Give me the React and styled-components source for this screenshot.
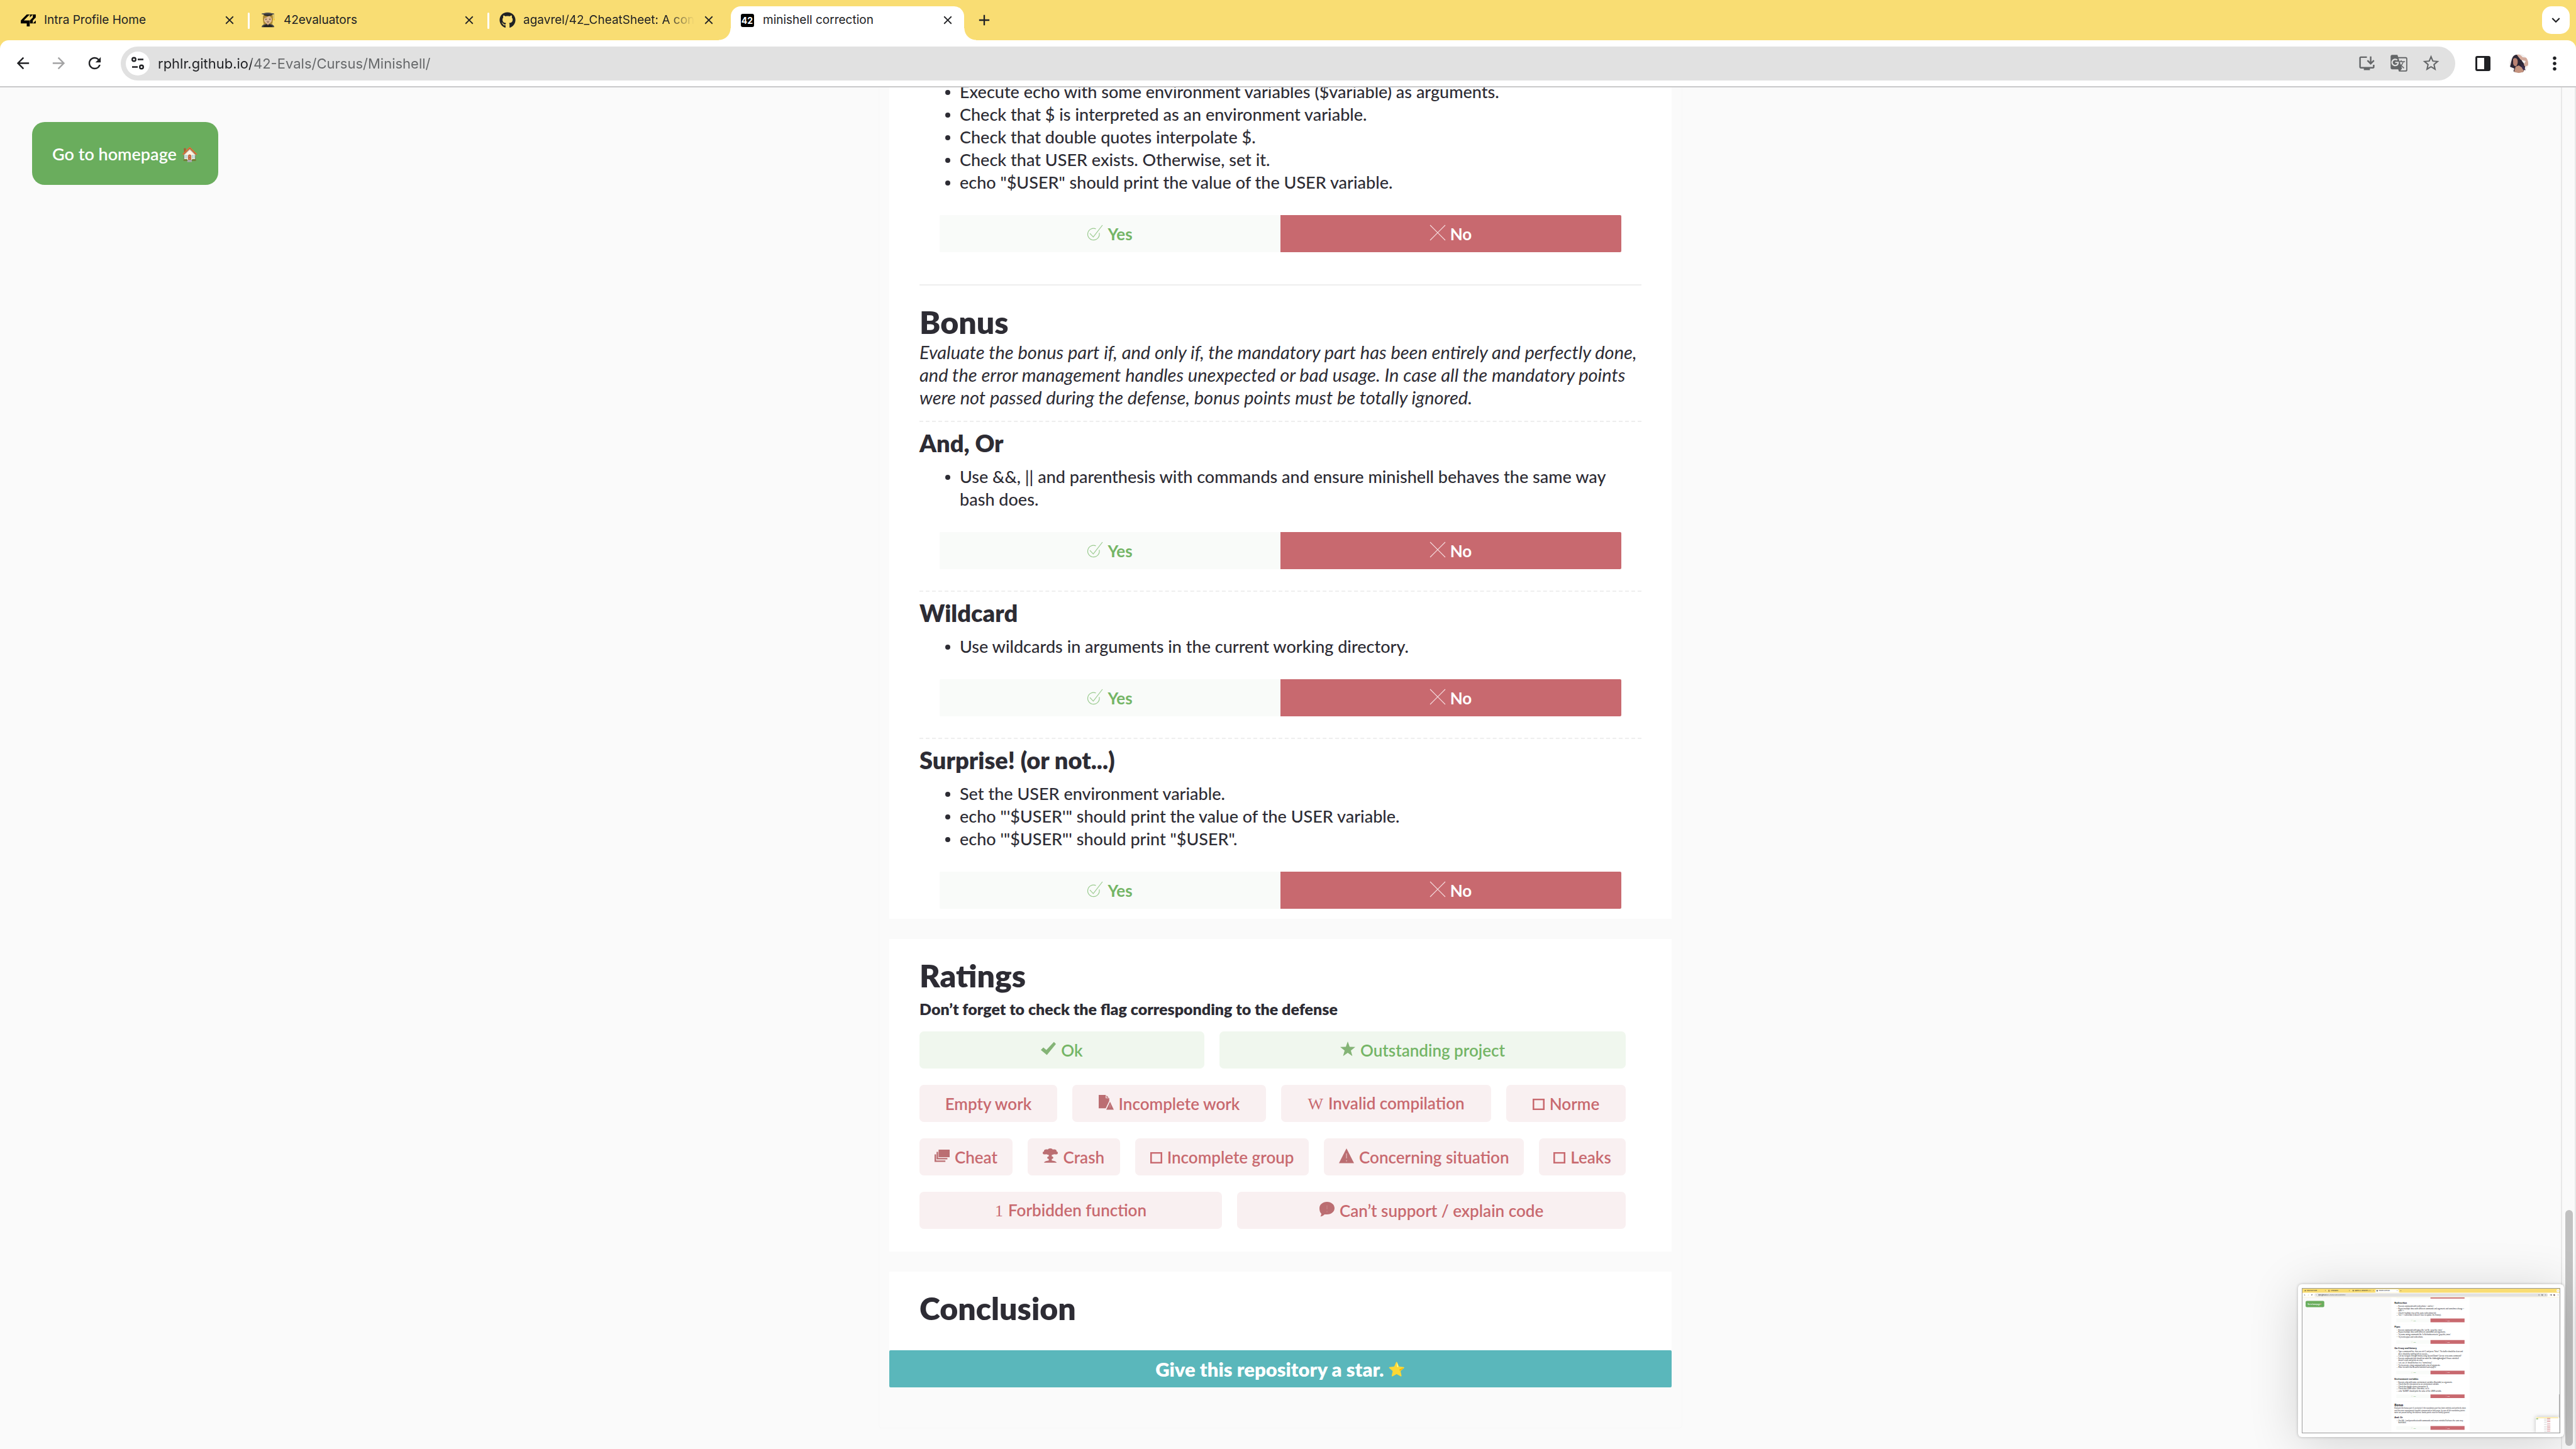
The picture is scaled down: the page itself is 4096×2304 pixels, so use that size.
import React from "react";
import styled, { createGlobalStyle, css } from "styled-components";
import {
  MdAdd,
  MdArrowBack,
  MdArrowForward,
  MdClose,
  MdGTranslate,
  MdInstallDesktop,
  MdKeyboardArrowDown,
  MdMoreVert,
  MdRefresh,
  MdStarOutline,
} from "react-icons/md";
import { FaGithub } from "react-icons/fa";

const ink = "#2d2c34";
const green = "#74b566";
const red = "#c8696f";
const chromeInk = "#202124";
const chromeGrey = "#646668";
const yellow = "#f9dd73";
const ui = `Inter, Roboto, "Noto Color Emoji", sans-serif`;
const body = `Lato, "Open Sans", "Noto Color Emoji", sans-serif`;

const GlobalStyle = createGlobalStyle`
  *, *::before, *::after { box-sizing: border-box; }
  body { margin: 0; background: #fafafa; }
  button, input { font: inherit; border: 0; padding: 0; margin: 0; }
  button { cursor: pointer; background: none; color: inherit; }
  h2, h3, p, ul { margin: 0; padding: 0; }
`;

/* ---------- browser window ---------- */

const Screen = styled.div`
  position: relative;
  height: 100vh;
  overflow: hidden;
`;

const Window = styled.div`
  display: flex;
  flex-direction: column;
  height: 100%;
  background: ${yellow};
  color: ${chromeInk};
  font-family: ${ui};
`;

const TabStrip = styled.nav`
  display: flex;
  align-items: flex-end;
  height: 64px;
  padding: 0 10px 0 16px;
  font-size: 19px;
  line-height: 24px;
`;

const Tab = styled.div`
  position: relative;
  display: flex;
  align-items: center;
  gap: 12px;
  width: 378px;
  height: 54px;
  padding: 0 18px 10px 16px;
  ${(p) =>
    p.$active &&
    css`
      width: 371px;
      margin-left: 6px;
      padding: 0 15px 10px 13px;
      background: #fff;
      border-radius: 16px 16px 0 0;
      &::before,
      &::after {
        content: "";
        position: absolute;
        bottom: 0;
        width: 19px;
        height: 19px;
      }
      &::before {
        right: 100%;
        background: radial-gradient(circle at 0 0, transparent 18px, #fff 19px);
      }
      &::after {
        left: 100%;
        background: radial-gradient(circle at 100% 0, transparent 18px, #fff 19px);
      }
    `}
`;

const TabDivider = styled.div`
  width: 3px;
  height: 26px;
  margin-bottom: 18px;
  border-radius: 2px;
  background: #fff;
`;

const Favicon = styled.span`
  display: flex;
  justify-content: center;
  align-items: center;
  width: 26px;
  height: 26px;
  font-size: 21px;
  flex: none;
`;

const BadgeIcon = styled.span`
  width: 21px;
  height: 21px;
  border-radius: 3px;
  background: #000;
  color: #fff;
  font-size: 14px;
  font-weight: 700;
  line-height: 21px;
  text-align: center;
`;

const TabTitle = styled.span`
  flex: 1;
  min-width: 0;
  overflow: hidden;
  white-space: nowrap;
  ${(p) =>
    p.$faded &&
    css`
      mask-image: linear-gradient(to right, #000 calc(100% - 44px), transparent);
    `}
`;

const IconButton = styled.button`
  display: flex;
  align-items: center;
  justify-content: center;
  flex: none;
  width: ${(p) => p.$w || 57}px;
  height: ${(p) => p.$h || 54}px;
  color: ${(p) => p.$color || "inherit"};
`;

const NewTab = styled(IconButton)`
  margin-left: 18px;
  padding-bottom: 10px;
`;

const TabSearch = styled(IconButton)`
  align-self: flex-start;
  margin: 10px 0 0 auto;
  border-radius: 15px;
  background: #fff;
`;

const Toolbar = styled.div`
  display: flex;
  align-items: center;
  height: 75px;
  padding: 0 6px 0 8px;
  background: #fff;
  border-bottom: 2px solid #c9c9ca;
  border-radius: 14px 14px 0 0;
`;

const AddressBar = styled.label`
  display: flex;
  align-items: center;
  flex: 1;
  height: 54px;
  margin: 0 15px 0 13px;
  padding: 0 13px 0 8px;
  border-radius: 27px;
  background: #e1e1e1;
`;

const SiteInfo = styled(IconButton)`
  margin-right: 13px;
  border-radius: 50%;
  background: #fff;
`;

const Address = styled.input`
  flex: 1;
  min-width: 0;
  height: 38px;
  outline: 0;
  font-size: 22px;
  color: transparent;
  background: linear-gradient(to right, ${chromeInk} 149px, ${chromeGrey} 149px);
  background-clip: text;
  -webkit-background-clip: text;
`;

/* ---------- page area ---------- */

const PageArea = styled.div`
  display: flex;
  flex: 1;
  min-height: 0;
  background: #fafafa;
`;

const Viewport = styled.div`
  position: relative;
  display: flex;
  flex-direction: column;
  justify-content: flex-end;
  align-items: center;
  flex: 1;
  min-width: 0;
  overflow: hidden;
  font-family: ${body};
  font-weight: 500;
  color: ${ink};
`;

const HomeLink = styled.a`
  position: absolute;
  top: 55px;
  left: 51px;
  display: flex;
  align-items: center;
  gap: 7px;
  height: 100px;
  padding: 0 32px;
  border-radius: 20px;
  background: #6aad5d;
  color: #fff;
  font-size: 27px;
  font-weight: 600;
  text-decoration: none;
`;

const Emoji = styled.span`
  font-size: 22px;
`;

const Sheet = styled.main`
  display: flex;
  flex-direction: column;
  gap: 32px;
  width: 1278px;
  max-width: 100%;
  margin-bottom: ${(p) => (p.$atEnd ? 33 : 0)}px;
  padding: 0 16px ${(p) => (p.$atEnd ? 64 : 0)}px;
  background: #fafafa;
  border: 1px solid #f7f7f7;
  border-top: 0;
  border-radius: 0 0 5px 5px;
`;

const Card = styled.section`
  padding: ${(p) => p.$top || 0}px 48px ${(p) => p.$bottom || 0}px;
  background: #fff;
`;

const Title = styled.h2`
  font-size: 50px;
  line-height: 60px;
  font-weight: 800;
`;

const Question = styled.article`
  & + & {
    margin-top: 34px;
    padding-top: 13px;
    border-top: 2px dashed #eeeeee;
  }
`;

const QuestionTitle = styled.h3`
  margin-bottom: 16px;
  font-size: 38px;
  line-height: 40px;
  font-weight: 800;
`;

const Points = styled.ul`
  margin: 0 32px 34px 64px;
  list-style: none;
  font-size: 27px;
  line-height: 36px;
`;

const Point = styled.li`
  position: relative;
  &::before {
    content: "";
    position: absolute;
    left: -23px;
    top: 15px;
    width: 8px;
    height: 8px;
    border-radius: 50%;
    background: ${ink};
  }
`;

const Answers = styled.div`
  display: grid;
  grid-template-columns: 1fr 1fr;
  margin: 0 32px;
`;

const Answer = styled.button`
  display: flex;
  align-items: center;
  justify-content: center;
  height: 59px;
  font-size: 26px;
  font-weight: 700;
  color: ${(p) => (p.$no ? "#fff" : green)};
  background: ${(p) => (p.$no ? red : "#f9fbf9")};
  border-radius: ${(p) => (p.$no ? "0 2px 2px 0" : "2px 0 0 2px")};
`;

const IconText = styled.span`
  display: inline-flex;
  align-items: baseline;
  gap: 8px;
  white-space: nowrap;
`;

const BonusHeader = styled.header`
  margin-top: 51px;
  padding-top: 28px;
  border-top: 2px solid #eeeeee;
`;

const Lead = styled.p`
  margin-bottom: 19px;
  font-size: 29px;
  line-height: 36px;
  font-style: italic;
  font-weight: 400;
  white-space: nowrap;
`;

const Dashed = styled.div`
  padding-top: 13px;
  border-top: 2px dashed #eeeeee;
`;

const Hint = styled.p`
  margin: 5px 0 18px;
  font-size: 25px;
  line-height: 36px;
  font-weight: 800;
`;

const Flags = styled.div`
  display: flex;
  flex-direction: column;
  gap: 26px;
  margin-right: 25px;
`;

const FlagRow = styled.div`
  display: flex;
  gap: 24px;
`;

const Flag = styled.button`
  display: flex;
  align-items: center;
  justify-content: center;
  flex: ${(p) => p.$grow} 1 0;
  min-width: 0;
  height: 59px;
  border-radius: 7px;
  font-size: 26px;
  font-weight: 600;
  color: ${(p) => (p.$good ? green : red)};
  background: ${(p) => (p.$good ? "#f0f7ee" : "#f9f0f1")};
`;

const SerifMark = styled.span`
  font-family: "Liberation Serif", serif;
  font-weight: 400;
`;

const StarLink = styled.a`
  display: flex;
  align-items: center;
  justify-content: center;
  gap: 7px;
  height: 59px;
  margin: 37px -48px 0;
  border-radius: 2px;
  background: #5ab7bb;
  color: #fff;
  font-size: 31px;
  font-weight: 800;
  text-decoration: none;
`;

const ScrollTrack = styled.div`
  display: flex;
  flex-direction: column;
  width: 24px;
  padding: 0 3px 0 5px;
  background: #fafafa;
  border: solid #e8e8e8;
  border-width: 0 2px;
`;

const TrackSpace = styled.div`
  flex: ${(p) => p.$grow} 1 0;
`;

const Thumb = styled.div`
  flex: ${(p) => p.$grow} 1 0;
  border-radius: 6px;
  background: #c1c1c1;
`;

/* ---------- floating capture preview ---------- */

const Preview = styled.aside`
  position: absolute;
  right: 19px;
  bottom: 19px;
  padding: 6px;
  border-radius: 6px;
  background: #fff;
  box-shadow: 0 0 4px rgba(0, 0, 0, 0.25), 0 10px 80px rgba(0, 0, 0, 0.16);
`;

const PreviewFrame = styled.div`
  width: 411px;
  height: 231px;
  border: 1px solid #9b9b9b;
  overflow: hidden;
`;

const PreviewScale = styled.div`
  position: relative;
  width: 4096px;
  height: 2304px;
  transform: scale(0.1);
  transform-origin: 0 0;
`;

const NestedPreview = styled.svg`
  position: absolute;
  right: 19px;
  bottom: 19px;
  width: 368px;
  height: 246px;
  background: #fff;
  box-shadow: 0 0 60px rgba(0, 0, 0, 0.25);
`;

/* ---------- drawings ---------- */

const Logo42 = () => (
  <svg width="24" height="19" viewBox="0 7 24.5 19.6" fill="#000" aria-hidden="true">
    <path d="M9.7 7h4.9L4.9 16.8h9.7v9.8H9.7v-4.9H0v-4.9z" />
    <path d="M14.9 7h4.8l-4.8 4.9zM19.7 7h4.8v4.9l-4.8 4.9v4.9h-4.8v-4.9l4.8-4.9zM24.5 16.8v4.9h-4.8z" />
  </svg>
);

const TuneIcon = () => (
  <svg width="20" height="23" viewBox="0 0 20 23" fill="none" stroke={chromeInk} strokeWidth="2.4" aria-hidden="true">
    <circle cx="4" cy="5.5" r="2.8" />
    <path d="M10 5.5h9M1 17.5h9" />
    <circle cx="16" cy="17.5" r="2.8" />
  </svg>
);

const SidePanelIcon = () => (
  <svg width="24" height="24" viewBox="0 0 24 24" aria-hidden="true">
    <rect width="24" height="24" rx="3" fill={chromeInk} />
    <rect x="3" y="3" width="11" height="18" fill="#fff" />
  </svg>
);

const Avatar = () => (
  <svg width="30" height="30" viewBox="0 0 30 30" aria-hidden="true">
    <clipPath id="face">
      <circle cx="15" cy="15" r="15" />
    </clipPath>
    <g clipPath="url(#face)">
      <rect width="30" height="30" fill="#f3efee" />
      <path d="M1 20C3 16 3 5 8 2c5-3 10 1 11 6 1 5 7 8 6 13l-3 8H6l2-6z" fill="#2c2635" />
      <path d="M12 1c5-1 7 2 9 4l9 1v12l-5 2-2-3 3-6-8-2-4-5z" fill="#d3aa9b" />
      <path d="M6 8c2-3 6-2 7 1 1 4 0 8-2 10-3 1-5-2-5-5z" fill="#b98273" />
      <path d="M10 20l5-2 6 4 3 8-8 2-9-2z" fill="#c4937f" />
      <path d="M18 15l5 4 3 7-5-2z" fill="#3a2c4c" />
    </g>
  </svg>
);

const Glyph = styled.svg.attrs({ viewBox: "0 0 30 30", "aria-hidden": true })`
  width: 24px;
  height: 24px;
  overflow: visible;
  fill: ${(p) => p.$fill || "#bb6e72"};
`;

const YesIcon = () => (
  <Glyph $fill="none" stroke="#9bcb90" strokeWidth="1.5">
    <path d="M16.8 7.3A11.6 11.6 0 1 0 23.6 15.5M5 16.5l6.7 7L30 0" />
  </Glyph>
);

const NoIcon = () => (
  <Glyph $fill="none" stroke="#f6dfe1" strokeWidth="1.4">
    <path d="M0 0l30 30M30 0L0 30" />
  </Glyph>
);

const OkIcon = () => (
  <Glyph $fill="#84b476">
    <path d="M0 17l5-5 6 5L26 1l4 4-18 22z" />
  </Glyph>
);

const StarIcon = () => (
  <Glyph $fill="#84b476">
    <path d="M15 0l3.8 10.6L30 11l-8.800 7 3 11L15 22.500 5.700 29l3.100-11L0 11l11.200-.4z" />
  </Glyph>
);

const FileIcon = () => (
  <Glyph>
    <path d="M0 0h14v6.500h7v5.500l-7 14.500H0zM15.500 1v4.500H20zM22.500 13.500L30 29.500H15z" />
    <path d="M22.500 19v6" stroke="#dba9ab" />
  </Glyph>
);

const CardsIcon = () => (
  <Glyph>
    <rect x="8" y="2.500" width="22" height="15" />
    <path d="M5.500 7v13.500h20M1.500 12v13.500h20" fill="none" stroke="#bb6e72" strokeWidth="3" />
  </Glyph>
);

const BlastIcon = () => (
  <Glyph>
    <ellipse cx="15" cy="3.500" rx="5" ry="3.500" />
    <ellipse cx="7.500" cy="5.500" rx="5" ry="3.500" />
    <ellipse cx="22.500" cy="5.500" rx="5" ry="3.500" />
    <ellipse cx="4" cy="9" rx="4" ry="3" />
    <ellipse cx="26" cy="9" rx="4" ry="3" />
    <path d="M5 6h20v5l-7 2v3c4 0 4 5 0 5v3c4 1 8 1 10 4.500H2.500C4 25 8 25 12 24v-3c-4 0-4-5 0-5v-3l-7-2z" />
  </Glyph>
);

const WarnIcon = () => (
  <Glyph>
    <path d="M15 0l15 29.500H0z" />
    <path d="M15 10v10M15 23v3" stroke="#dba9ab" strokeWidth="2" />
  </Glyph>
);

const SpeechIcon = () => (
  <Glyph>
    <path d="M15 0c8.500 0 15 5.500 15 12.500S24 25 15 25c-2 0-4 0-5 0-2 2-5 4-8 4 1-2 2-4 1.500-6C1 21 0 17 0 12.500 0 5.500 6.500 0 15 0z" />
    <path d="M15 7v8M15 18v3" stroke="#c58184" strokeWidth="2" />
  </Glyph>
);

const BoxGlyph = styled(Glyph)`
  width: 19px;
  height: 18px;
`;

const BoxIcon = () => (
  <BoxGlyph $fill="none" stroke={red} strokeWidth="4" preserveAspectRatio="none">
    <rect x="2" y="2" width="26" height="26" />
  </BoxGlyph>
);

/* ---------- content ---------- */

const environment = [
  "Execute echo with some environment variables ($variable) as arguments.",
  "Check that $ is interpreted as an environment variable.",
  "Check that double quotes interpolate $.",
  "Check that USER exists. Otherwise, set it.",
  'echo "$USER" should print the value of the USER variable.',
];

const andOr = {
  title: "And, Or",
  points: ["Use &&, || and parenthesis with commands and ensure minishell behaves the same way bash does."],
};

const bonus = [
  andOr,
  { title: "Wildcard", points: ["Use wildcards in arguments in the current working directory."] },
  {
    title: "Surprise! (or not...)",
    points: [
      "Set the USER environment variable.",
      `echo "'$USER'" should print the value of the USER variable.`,
      `echo '"$USER"' should print "$USER".`,
    ],
  },
];

const earlier = [
  {
    title: "Redirection",
    points: [
      "Execute commands with redirections < and/or >",
      "Repeat multiple times with different commands and arguments and sometimes change > with >>",
      "Check if multiple tries of the same redirections fail.",
      "Test << redirection (it doesn't have to update the history).",
    ],
  },
  {
    title: "Pipes",
    points: [
      "Execute commands with pipes like 'cat file | grep bla | more'",
      "Repeat multiple times with different commands and arguments.",
      "Try some wrong commands like 'ls filethatdoesntexist | grep bla | more'",
      "Try to mix pipes and redirections.",
    ],
  },
  {
    title: "Go Crazy and history",
    points: [
      'Type a command line, then use ctrl-C and press "Enter". The buffer should be clean and there should be nothing left to execute.',
      "Can we navigate through history using Up and Down? Can we retry some command?",
      "Execute commands that should not work like 'dsbksdgbksdghsd'. Ensure minishell doesn't crash and prints an error.",
      "'cat | cat | ls' should behave in a \"normal way\".",
      "Try to execute a long command with a ton of arguments.",
      "Have fun with that beautiful minishell and enjoy it!",
    ],
  },
  { title: "Environment variables", points: environment },
];

const flagRows = [
  [
    { label: "Ok", grow: 453, good: true, icon: <OkIcon /> },
    { label: "Outstanding project", grow: 646, good: true, icon: <StarIcon /> },
  ],
  [
    { label: "Empty work", grow: 219 },
    { label: "Incomplete work", grow: 308, icon: <FileIcon /> },
    { label: "Invalid compilation", grow: 334, icon: <SerifMark>W</SerifMark> },
    { label: "Norme", grow: 190, icon: <BoxIcon /> },
  ],
  [
    { label: "Cheat", grow: 148, icon: <CardsIcon /> },
    { label: "Crash", grow: 147, icon: <BlastIcon /> },
    { label: "Incomplete group", grow: 277, icon: <BoxIcon /> },
    { label: "Concerning situation", grow: 318, icon: <WarnIcon /> },
    { label: "Leaks", grow: 138, icon: <BoxIcon /> },
  ],
  [
    { label: "Forbidden function", grow: 482, icon: <SerifMark>1</SerifMark> },
    { label: "Can’t support / explain code", grow: 619, icon: <SpeechIcon /> },
  ],
];

const YesNo = () => (
  <Answers>
    <Answer type="button">
      <IconText>
        <YesIcon />
        Yes
      </IconText>
    </Answer>
    <Answer type="button" $no>
      <IconText>
        <NoIcon />
        No
      </IconText>
    </Answer>
  </Answers>
);

const QuestionBlock = ({ title, points }) => (
  <Question>
    {title && <QuestionTitle>{title}</QuestionTitle>}
    <Points>
      {points.map((text) => (
        <Point key={text}>{text}</Point>
      ))}
    </Points>
    <YesNo />
  </Question>
);

const BonusSection = ({ questions }) => (
  <>
    <BonusHeader>
      <Title>Bonus</Title>
      <Lead>
        Evaluate the bonus part if, and only if, the mandatory part has been entirely and perfectly done,
        <br />
        and the error management handles unexpected or bad usage. In case all the mandatory points
        <br />
        were not passed during the defense, bonus points must be totally ignored.
      </Lead>
    </BonusHeader>
    <Dashed>
      {questions.map((q) => (
        <QuestionBlock key={q.title} {...q} />
      ))}
    </Dashed>
  </>
);

const ClosingPage = () => (
  <Sheet $atEnd>
    <Card $bottom={16}>
      <QuestionBlock points={environment} />
      <BonusSection questions={bonus} />
    </Card>
    <Card $top={28} $bottom={36}>
      <Title>Ratings</Title>
      <Hint>Don’t forget to check the flag corresponding to the defense</Hint>
      <Flags>
        {flagRows.map((row) => (
          <FlagRow key={row[0].label}>
            {row.map((flag) => (
              <Flag key={flag.label} type="button" $grow={flag.grow} $good={flag.good}>
                <IconText>
                  {flag.icon}
                  {flag.label}
                </IconText>
              </Flag>
            ))}
          </FlagRow>
        ))}
      </Flags>
    </Card>
    <Card $top={28}>
      <Title>Conclusion</Title>
      <StarLink href="#star">
        Give this repository a star. <Emoji>⭐</Emoji>
      </StarLink>
    </Card>
  </Sheet>
);

const EarlierPage = () => (
  <Sheet>
    <Card $bottom={58}>
      <YesNo />
      <Question />
      {earlier.map((q) => (
        <QuestionBlock key={q.title} {...q} />
      ))}
      <BonusSection questions={[andOr]} />
    </Card>
  </Sheet>
);

const TabItem = ({ icon, title, active, faded }) => (
  <Tab $active={active}>
    <Favicon>{icon}</Favicon>
    <TabTitle $faded={faded}>{title}</TabTitle>
    <IconButton type="button" $w={22} $h={22} aria-label={`Close ${title}`}>
      <MdClose size={22} />
    </IconButton>
  </Tab>
);

const Browser = ({ children, thumb }) => (
  <Window>
    <TabStrip aria-label="Tabs">
      <TabItem icon={<Logo42 />} title="Intra Profile Home" />
      <TabDivider />
      <TabItem icon="👩🏼‍🎓" title="42evaluators" />
      <TabDivider />
      <TabItem icon={<FaGithub size={26} />} title="agavrel/42_CheatSheet: A con" faded />
      <TabItem icon={<BadgeIcon>42</BadgeIcon>} title="minishell correction" active />
      <NewTab type="button" $w={28} aria-label="New tab">
        <MdAdd size={28} />
      </NewTab>
      <TabSearch type="button" $w={44} $h={44} aria-label="Search tabs">
        <MdKeyboardArrowDown size={26} />
      </TabSearch>
    </TabStrip>
    <Toolbar>
      <IconButton type="button" aria-label="Back">
        <MdArrowBack size={29} />
      </IconButton>
      <IconButton type="button" aria-label="Forward" $color="#a3a3a4">
        <MdArrowForward size={29} />
      </IconButton>
      <IconButton type="button" aria-label="Reload">
        <MdRefresh size={29} />
      </IconButton>
      <AddressBar>
        <SiteInfo type="button" $w={38} $h={38} aria-label="Site information">
          <TuneIcon />
        </SiteInfo>
        <Address aria-label="Address" defaultValue="rphlr.github.io/42-Evals/Cursus/Minishell/" />
        <IconButton type="button" $w={51} $color={chromeGrey} aria-label="Install">
          <MdInstallDesktop size={29} />
        </IconButton>
        <IconButton type="button" $w={51} $color={chromeGrey} aria-label="Translate">
          <MdGTranslate size={29} />
        </IconButton>
        <IconButton type="button" $w={51} $color={chromeGrey} aria-label="Bookmark">
          <MdStarOutline size={31} />
        </IconButton>
      </AddressBar>
      <IconButton type="button" aria-label="Side panel">
        <SidePanelIcon />
      </IconButton>
      <IconButton type="button" aria-label="Profile">
        <Avatar />
      </IconButton>
      <IconButton type="button" aria-label="Menu">
        <MdMoreVert size={34} />
      </IconButton>
    </Toolbar>
    <PageArea>
      <Viewport>
        {children}
        <HomeLink href="#home">
          Go to homepage <Emoji>🏠</Emoji>
        </HomeLink>
      </Viewport>
      <ScrollTrack>
        <TrackSpace $grow={thumb[0]} />
        <Thumb $grow={thumb[1]} />
        <TrackSpace $grow={thumb[2]} />
      </ScrollTrack>
    </PageArea>
  </Window>
);

export default function App() {
  return (
    <Screen>
      <GlobalStyle />
      <Browser thumb={[1785, 375, 5]}>
        <ClosingPage />
      </Browser>
      <Preview aria-hidden="true" inert>
        <PreviewFrame>
          <PreviewScale>
            <Browser thumb={[1540, 375, 250]}>
              <EarlierPage />
            </Browser>
            <NestedPreview viewBox="0 0 138 92">
              <rect x="3" y="3" width="132" height="4" fill={yellow} />
              <rect x="3" y="9" width="11" height="5" fill="#6aad5d" />
              {[7, 17, 27, 40, 52, 62, 72, 83].map((y) => (
                <g key={y}>
                  <rect x="68" y={y} width="19" height="3" fill={red} />
                  <rect x="50" y={y + 4} width="14" height="1" fill="#999" />
                  <rect x="50" y={y + 6} width="20" height="1" fill="#bbb" />
                </g>
              ))}
            </NestedPreview>
          </PreviewScale>
        </PreviewFrame>
      </Preview>
    </Screen>
  );
}
